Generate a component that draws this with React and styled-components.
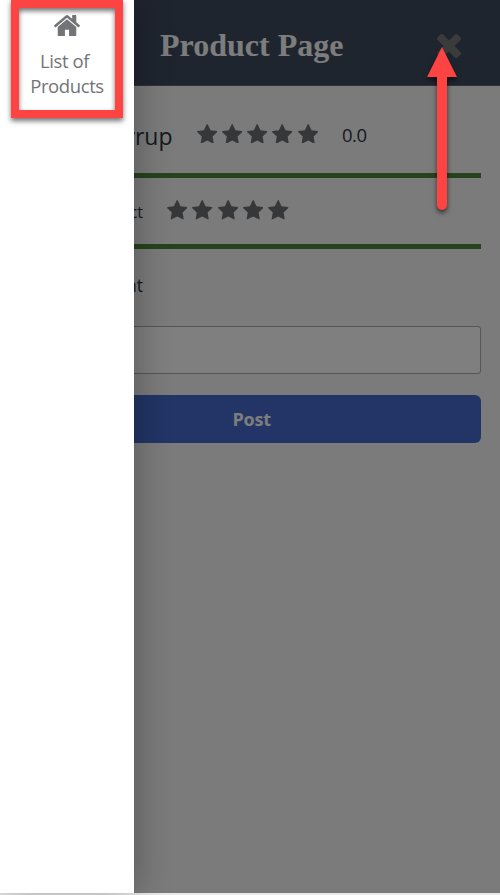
import React from "react";
import styled, { createGlobalStyle } from "styled-components";

const GlobalStyle = createGlobalStyle`
  *, *::before, *::after { box-sizing: border-box; }
  body { margin: 0; background: #e9e9e9; font-family: "Open Sans", "Noto Sans", sans-serif; }
`;

const Screen = styled.div`
  position: relative;
  height: 895px;
  overflow: hidden;
`;

const Page = styled.div`
  height: 893px;
  background: #f7f7f7;
  color: #2f343c;
`;

const Header = styled.header`
  display: flex;
  align-items: center;
  justify-content: space-between;
  height: 86px;
  padding: 6px 39px 0 160px;
  background: #3e4b5e;
  border-bottom: 1px solid #5d6472;
`;

const Title = styled.h1`
  margin: -2px 0 0;
  color: #fafafa;
  font: bold 32px/40px "Liberation Serif", serif;
`;

const CloseButton = styled.button`
  display: flex;
  padding: 0;
  border: 0;
  background: none;
  color: #767676;
`;

const Content = styled.main`
  display: flex;
  flex-direction: column;
  padding: 0 18.6px 0 18px;
`;

const RatingRow = styled.section`
  display: flex;
  align-items: center;
  height: ${(p) => p.$height}px;
  padding-top: ${(p) => p.$top || 0}px;
  padding-bottom: ${(p) => p.$bottom || 0}px;
  border-bottom: 5px solid #4c873c;
`;

const Label = styled.span`
  width: ${(p) => p.$width}px;
  padding-top: ${(p) => p.$drop}px;
  margin-right: 24px;
  font-size: ${(p) => p.$size}px;
  line-height: 28px;
  text-align: right;
  white-space: nowrap;
`;

const Stars = styled.div`
  display: flex;
  gap: 4.9px;
  color: #6c6f73;
`;

const Score = styled.span`
  margin-left: 24px;
  padding-top: 2px;
  font-size: 18.5px;
  line-height: 28px;
  letter-spacing: -0.5px;
`;

const FieldLabel = styled.label`
  width: 125px;
  margin-top: 22px;
  font-size: 17.5px;
  line-height: 28px;
  text-align: right;
`;

const CommentInput = styled.input`
  height: 48px;
  margin-top: 27px;
  border: 1.5px solid #aaaab5;
  border-radius: 3px;
  background: #fff;
`;

const PostButton = styled.button`
  height: 48px;
  margin-top: 21px;
  padding: 0 0 0 4px;
  border: 0;
  border-radius: 6px;
  background: #446acc;
  color: #fafafa;
  font: bold 18px/28px "Open Sans", sans-serif;
  letter-spacing: -0.2px;
`;

const Backdrop = styled.div`
  position: absolute;
  inset: 0 0 2px;
  background: rgba(0, 0, 0, 0.5);
`;

const Drawer = styled.nav`
  position: absolute;
  inset: 0 auto 2px 0;
  width: 134px;
  background: #fff;
  box-shadow: 0 0 36px rgba(0, 0, 0, 0.32);
`;

const DrawerLink = styled.a`
  display: flex;
  flex-direction: column;
  align-items: center;
  padding-top: 15px;
  color: #737477;
  font-size: 18.5px;
  line-height: 25px;
  letter-spacing: -0.4px;
  text-align: center;
`;

const LinkText = styled.span`
  margin-top: 12px;
`;

const LinkLine = styled.span`
  display: block;
  margin-left: ${(p) => p.$shift || 0}px;
`;

const Highlight = styled.div`
  position: absolute;
  top: -1px;
  left: 11px;
  width: 112px;
  height: 119px;
  border: 8px solid #fe4343;
  border-top-width: 9px;
  box-shadow: 0 3px 5px rgba(0, 0, 0, 0.55), inset 0 3px 5px rgba(0, 0, 0, 0.55);
`;

const Arrow = styled.svg`
  position: absolute;
  top: 40px;
  left: 420px;
  overflow: visible;
  filter: drop-shadow(0 3px 2.5px rgba(0, 0, 0, 0.6));
`;

const HomeIcon = () => (
  <svg width="26" height="21" viewBox="89 253 1614 1283" preserveAspectRatio="none" fill="currentColor">
    <path d="M1472 992v480q0 26-19 45t-45 19h-384v-384h-256v384h-384q-26 0-45-19t-19-45v-480q0-1 .5-3t.5-3l575-474 575 474q1 2 1 6zm223-69l-62 74q-8 9-21 11h-3q-13 0-21-7l-692-577-692 577q-12 8-24 7-13-2-21-11l-62-74q-8-10-7-23.5t11-21.5l719-599q32-26 76-26t76 26l244 204v-195q0-14 9-23t23-9h192q14 0 23 9t9 23v408l219 182q10 8 11 21.5t-7 23.5z" />
  </svg>
);

const CloseIcon = () => (
  <svg width="24" height="24" viewBox="302 366 1188 1188" fill="currentColor">
    <path d="M1490 1322q0 40-28 68l-136 136q-28 28-68 28t-68-28l-294-294-294 294q-28 28-68 28t-68-28l-136-136q-28-28-28-68t28-68l294-294-294-294q-28-28-28-68t28-68l136-136q28-28 68-28t68 28l294 294 294-294q28-28 68-28t68 28l136 136q28 28 28 68t-28 68l-294 294 294 294q28 28 28 68z" />
  </svg>
);

const StarIcon = () => (
  <svg width="20.4" height="19.6" viewBox="64 32 1664 1587" fill="currentColor">
    <path d="M1728 647q0 22-26 48l-363 354 86 500q1 7 1 20 0 21-10.5 35.5t-30.5 14.5q-19 0-40-12l-449-236-449 236q-22 12-40 12-21 0-31.5-14.5t-10.5-35.5q0-6 2-20l86-500-364-354q-25-27-25-48 0-37 56-46l502-73 225-455q19-41 49-41t49 41l225 455 502 73q56 9 56 46z" />
  </svg>
);

const StarRating = () => (
  <Stars>
    {[1, 2, 3, 4, 5].map((n) => (
      <StarIcon key={n} />
    ))}
  </Stars>
);

export default function App() {
  return (
    <Screen>
      <GlobalStyle />
      <Page>
        <Header>
          <Title>Product Page</Title>
          <CloseButton aria-label="Close menu">
            <CloseIcon />
          </CloseButton>
        </Header>
        <Content>
          <RatingRow $height={92} $top={8}>
            <Label $width={154.5} $size={23} $drop={4}>Syrup</Label>
            <StarRating />
            <Score>0.0</Score>
          </RatingRow>
          <RatingRow $height={71} $bottom={2}>
            <Label $width={125} $size={16} $drop={3}>Product</Label>
            <StarRating />
          </RatingRow>
          <FieldLabel htmlFor="comment">Comment</FieldLabel>
          <CommentInput id="comment" />
          <PostButton>Post</PostButton>
        </Content>
      </Page>
      <Backdrop />
      <Drawer>
        <DrawerLink>
          <HomeIcon />
          <LinkText>
            <LinkLine $shift={-5}>List of</LinkLine>
            <LinkLine>Products</LinkLine>
          </LinkText>
        </DrawerLink>
      </Drawer>
      <Highlight />
      <Arrow width="44" height="172" viewBox="0 0 44 172" fill="#fe4343">
        <path d="M22 7 37 37H27V165a5 5 0 0 1-10 0V37H7Z" />
      </Arrow>
    </Screen>
  );
}
